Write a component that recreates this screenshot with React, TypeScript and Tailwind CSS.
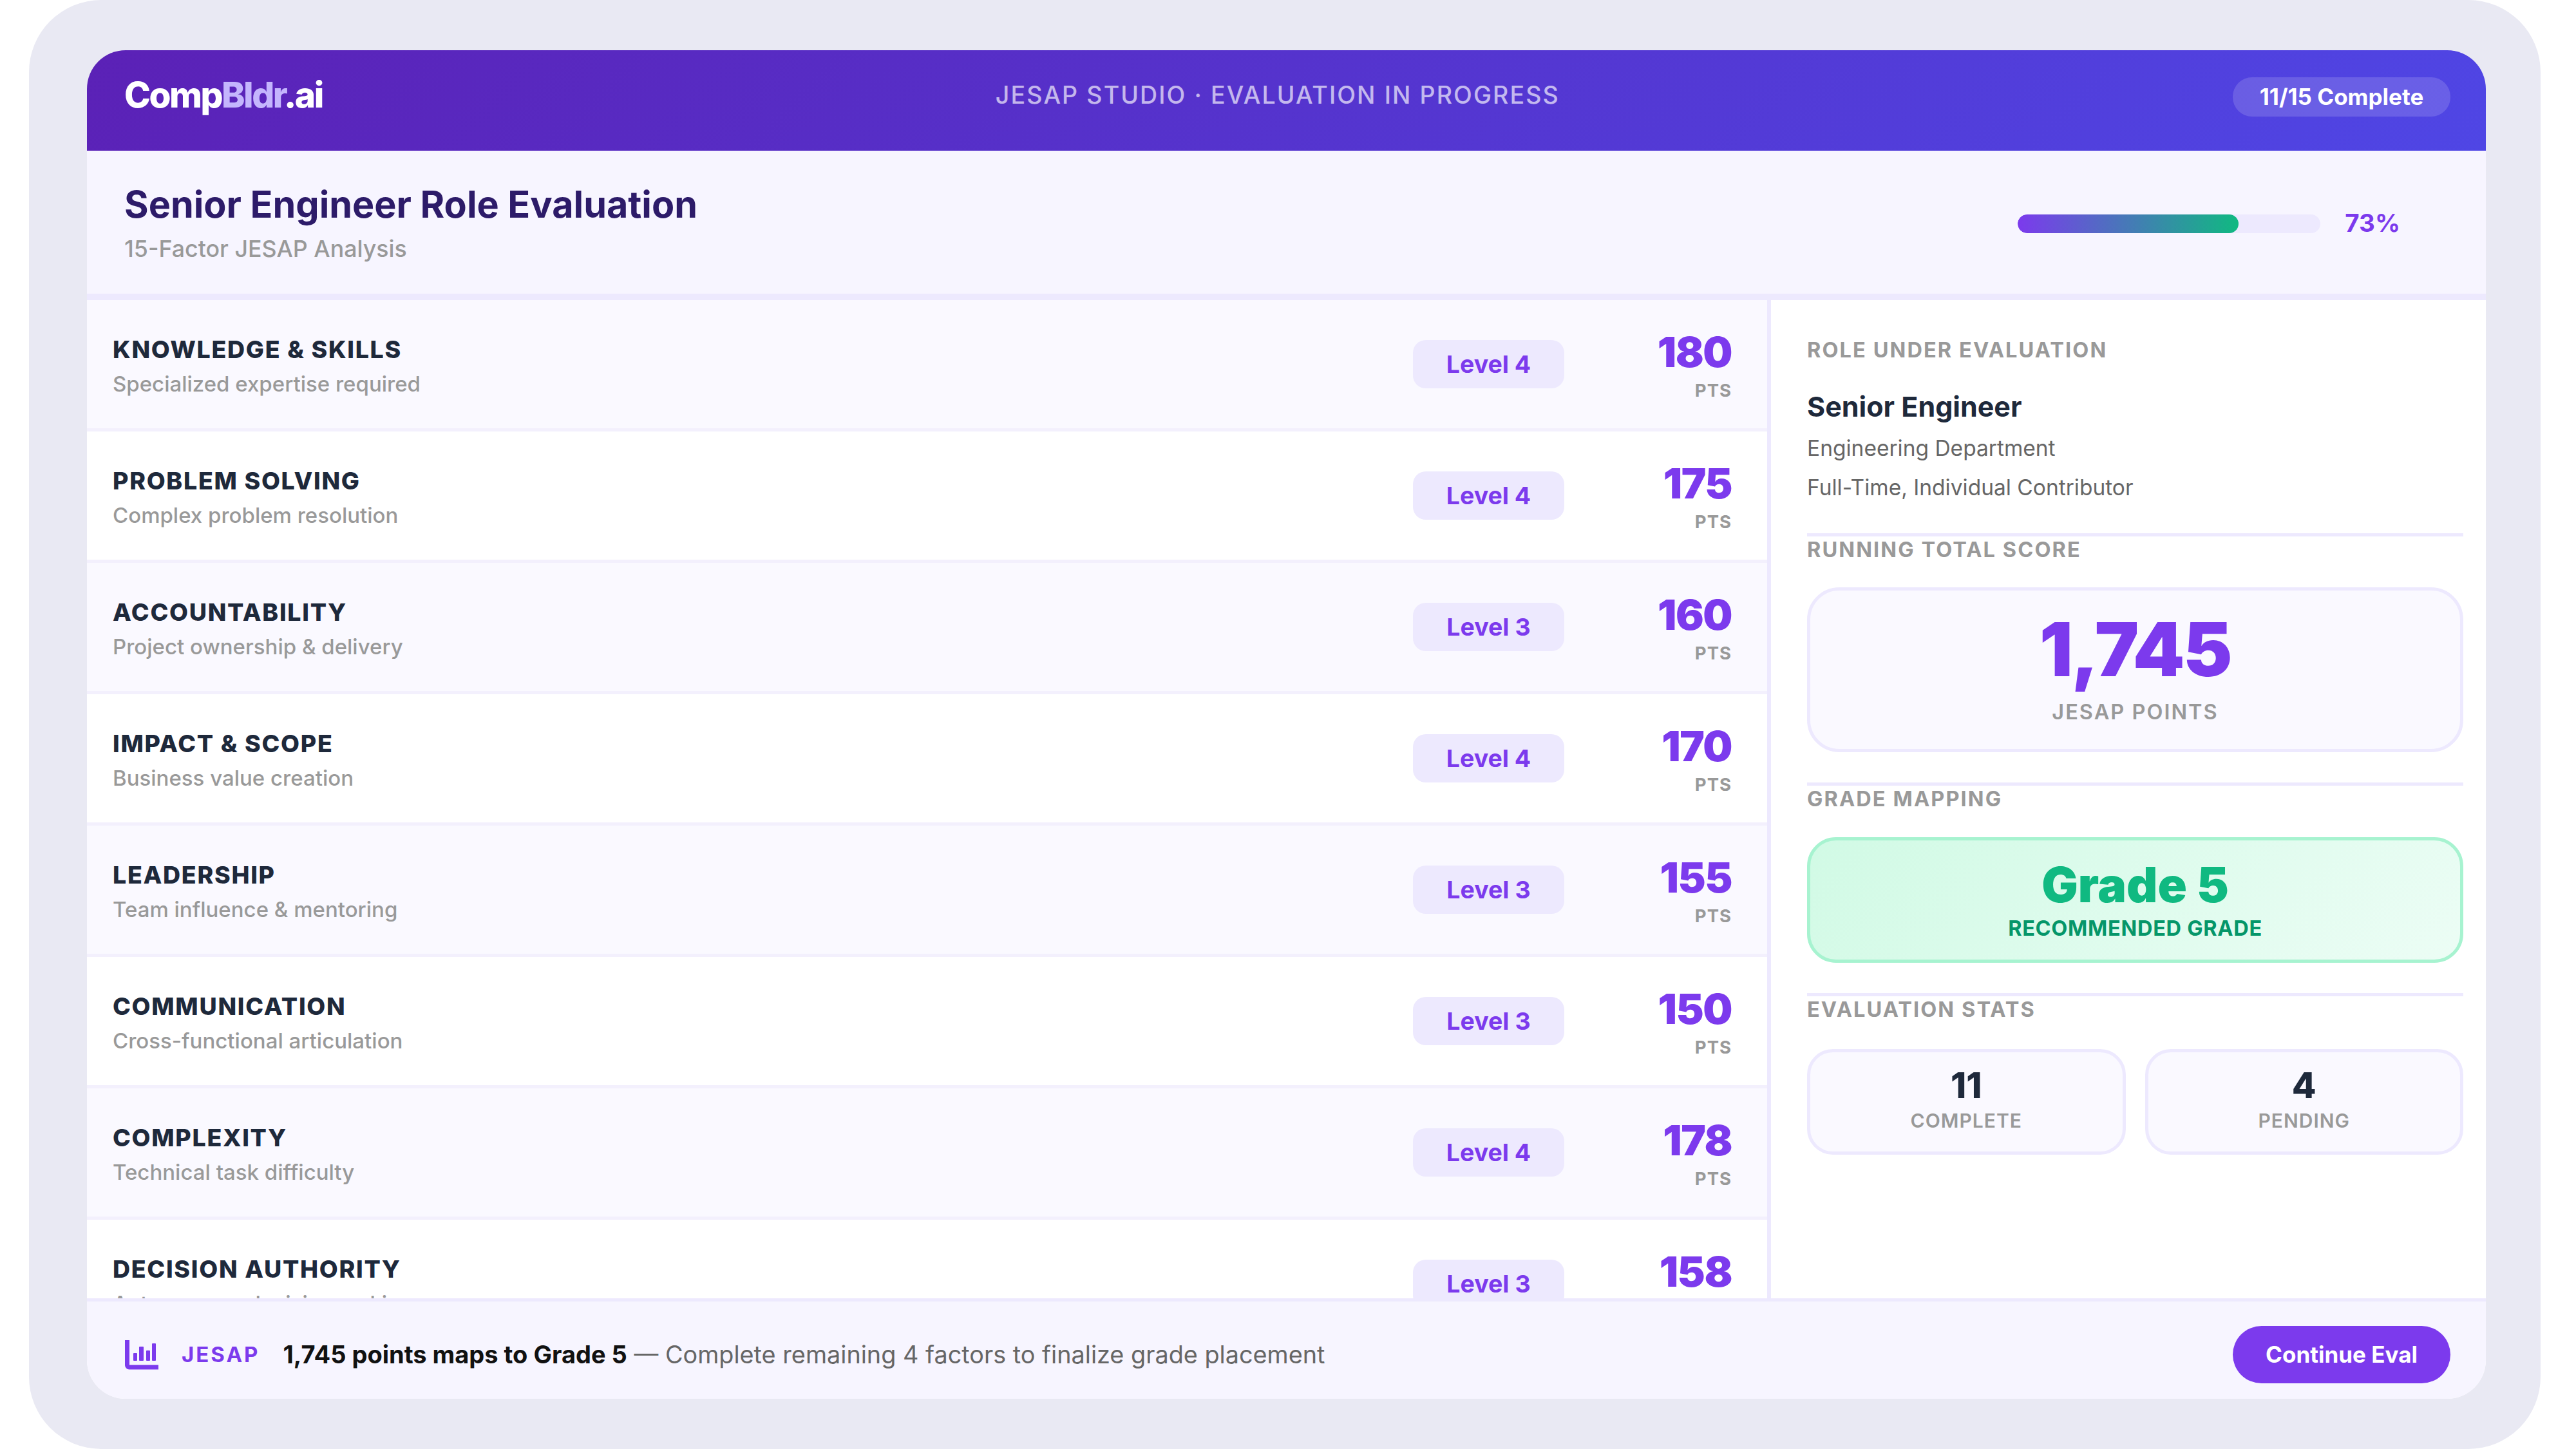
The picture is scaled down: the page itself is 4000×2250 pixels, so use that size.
import React from 'react';

const factors = [
  { name: 'KNOWLEDGE & SKILLS', desc: 'Specialized expertise required', level: 4, pts: 180 },
  { name: 'PROBLEM SOLVING', desc: 'Complex problem resolution', level: 4, pts: 175 },
  { name: 'ACCOUNTABILITY', desc: 'Project ownership & delivery', level: 3, pts: 160 },
  { name: 'IMPACT & SCOPE', desc: 'Business value creation', level: 4, pts: 170 },
  { name: 'LEADERSHIP', desc: 'Team influence & mentoring', level: 3, pts: 155 },
  { name: 'COMMUNICATION', desc: 'Cross-functional articulation', level: 3, pts: 150 },
  { name: 'COMPLEXITY', desc: 'Technical task difficulty', level: 4, pts: 178 },
  { name: 'DECISION AUTHORITY', desc: 'Autonomous decision making', level: 3, pts: 158 },
];

function SectionLabel({ children }: { children: React.ReactNode }) {
  return <div className="text-[32.5px] leading-[40px] font-bold tracking-[2.1px] text-[#999999]">{children}</div>;
}

export default function App() {
  return (
    <div className="w-[4000px] h-[2250px] bg-white pl-[45px] pr-[55px] font-['Inter',sans-serif]">
      <div className="w-[3900px] h-[2250px] rounded-[112px] bg-[#e9e9f3] pl-[90px] pr-[85px] py-[78px]">
        <div className="h-full flex flex-col overflow-hidden rounded-[60px] bg-white">
          <header className="h-[156px] shrink-0 flex items-center justify-between pl-[58px] pr-[55px] pb-[12px] bg-[linear-gradient(135deg,#5b21b6,#4f46e5)]">
            <div className="pb-[5px] text-[55px] font-extrabold tracking-[-2.5px] text-white">
              Comp<span className="text-[#c4b5fd]">Bldr</span>.ai
            </div>
            <div className="pb-[3px] text-[37.5px] font-medium tracking-[2.1px] text-white/65">JESAP STUDIO · EVALUATION IN PROGRESS</div>
            <div className="w-[338px] h-[61px] flex items-center justify-center rounded-[30px] bg-white/15 text-[35px] font-bold text-white">11/15 Complete</div>
          </header>

          <section className="h-[232px] shrink-0 flex items-center justify-between pl-[58px] pr-[133px] bg-[#f7f5ff] border-b-[10px] border-[#ede9fe]">
            <div>
              <h1 className="text-[57.5px] leading-[72px] font-bold text-[#2d1b69]">Senior Engineer Role Evaluation</h1>
              <p className="mt-[10px] text-[35.75px] leading-[46px] font-medium text-[#999999]">15-Factor JESAP Analysis</p>
            </div>
            <div className="mt-[4px] flex items-center gap-[38px]">
              <div className="w-[470px] h-[29px] rounded-full bg-[#ede9fe] overflow-hidden">
                <div className="w-[73%] h-full rounded-full bg-[linear-gradient(90deg,#7c3aed,#10b981)]" />
              </div>
              <span className="text-[38.5px] font-bold text-[#7c3aed]">73%</span>
            </div>
          </section>

          <div className="flex-1 min-h-0 flex">
            <div className="w-[2615px] shrink-0 overflow-hidden border-r-[6px] border-[#ede9fe]">
              {factors.map((f, i) => (
                <div key={f.name} className={`h-[204px] flex items-center pl-[40px] pr-[55px] border-b-[5px] border-[#f3f0fd] ${i % 2 === 0 ? 'bg-[#faf9ff]' : 'bg-white'}`}>
                  <div className="flex-1 pt-[4px]">
                    <div className="text-[37.5px] leading-[50px] font-extrabold tracking-[1.7px] text-[#1e293b]">{f.name}</div>
                    <div className="mt-[6px] text-[33px] leading-[44px] font-medium text-[#999999]">{f.desc}</div>
                  </div>
                  <div className="w-[235px] h-[75px] flex items-center justify-center rounded-[20px] bg-[#ede9fe] pt-[2px] text-[37.5px] font-bold text-[#7c3aed]">Level {f.level}</div>
                  <div className="w-[260px] pt-[4px] text-right">
                    <div className="text-[65px] leading-[72px] font-black tracking-[-1.5px] text-[#7c3aed]">{f.pts}</div>
                    <div className="mt-[5px] text-[27.5px] leading-[36px] font-bold tracking-[1px] text-[#999999]">PTS</div>
                  </div>
                </div>
              ))}
            </div>

            <aside className="flex-1 pl-[56px] pr-[35px] pt-[58px] flex flex-col">
              <SectionLabel>ROLE UNDER EVALUATION</SectionLabel>
              <div className="mt-[38px] text-[43px] leading-[58px] font-bold text-[#1e293b]">Senior Engineer</div>
              <div className="mt-[6px] text-[33.5px] leading-[61px] text-[#666666]">Engineering Department</div>
              <div className="text-[33.5px] leading-[61px] text-[#666666]">Full-Time, Individual Contributor</div>

              <div className="mt-[40px] pt-[1px] border-t-[5px] border-[#ede9fe]">
                <SectionLabel>RUNNING TOTAL SCORE</SectionLabel>
              </div>
              <div className="mt-[38px] h-[256px] pb-[7px] flex flex-col items-center justify-center rounded-[50px] border-[5px] border-[#ede9fe] bg-[#faf9ff]">
                <div className="text-[115px] leading-[128px] font-black tracking-[-2.5px] text-[#7c3aed]">1,745</div>
                <div className="mt-[11px] text-[32.5px] leading-[44px] font-semibold tracking-[2px] text-[#999999]">JESAP POINTS</div>
              </div>

              <div className="mt-[47px] pt-[1px] border-t-[5px] border-[#ede9fe]">
                <SectionLabel>GRADE MAPPING</SectionLabel>
              </div>
              <div className="mt-[39px] h-[195px] pb-[2px] flex flex-col items-center justify-center rounded-[45px] border-[5px] border-[#a7f3d0] bg-[linear-gradient(135deg,#d1fae5,#ecfdf5)]">
                <div className="text-[75px] leading-[88px] font-black text-[#10b981]">Grade 5</div>
                <div className="mt-[2px] text-[32.5px] leading-[44px] font-bold tracking-[0.7px] text-[#059669]">RECOMMENDED GRADE</div>
              </div>

              <div className="mt-[47px] pt-[1px] border-t-[5px] border-[#ede9fe]">
                <SectionLabel>EVALUATION STATS</SectionLabel>
              </div>
              <div className="mt-[41px] grid grid-cols-2 gap-[30px]">
                {[['11', 'COMPLETE'], ['4', 'PENDING']].map(([n, l]) => (
                  <div key={l} className="h-[164px] pb-[8px] flex flex-col items-center justify-center rounded-[40px] border-[5px] border-[#ede9fe] bg-[#faf9ff]">
                    <div className="text-[55px] leading-[66px] font-extrabold text-[#1e293b]">{n}</div>
                    <div className="text-[30px] leading-[44px] font-semibold tracking-[1px] text-[#999999]">{l}</div>
                  </div>
                ))}
              </div>
            </aside>
          </div>

          <footer className="h-[156px] shrink-0 flex items-center pl-[55px] pr-[55px] pt-[14px] bg-[#f7f5ff] border-t-[5px] border-[#ede9fe]">
            <svg className="w-[60px] h-[52px] shrink-0" viewBox="0 0 60 52" fill="#7c3aed">
              <path d="M7.5 3V42a3 3 0 0 0 3 3H56" fill="none" stroke="#7c3aed" strokeWidth="7" />
              <rect x="17" y="23" width="6" height="12" rx="1" />
              <rect x="26" y="13" width="7" height="22" rx="1" />
              <rect x="37" y="19" width="6" height="16" rx="1" />
              <rect x="46" y="8" width="6" height="27" rx="1" />
            </svg>
            <span className="ml-[32px] text-[33px] font-bold tracking-[3px] text-[#7c3aed]">JESAP</span>
            <span className="ml-[36px] text-[37.8px] text-[#666666]">
              <strong className="text-[38px] font-bold text-[#111111]">1,745 points maps to Grade 5</strong> — Complete remaining 4 factors to finalize grade placement
            </span>
            <button className="ml-auto w-[338px] h-[89px] rounded-full bg-[#7c3aed] text-[35px] font-bold text-white">Continue Eval</button>
          </footer>
        </div>
      </div>
    </div>
  );
}
